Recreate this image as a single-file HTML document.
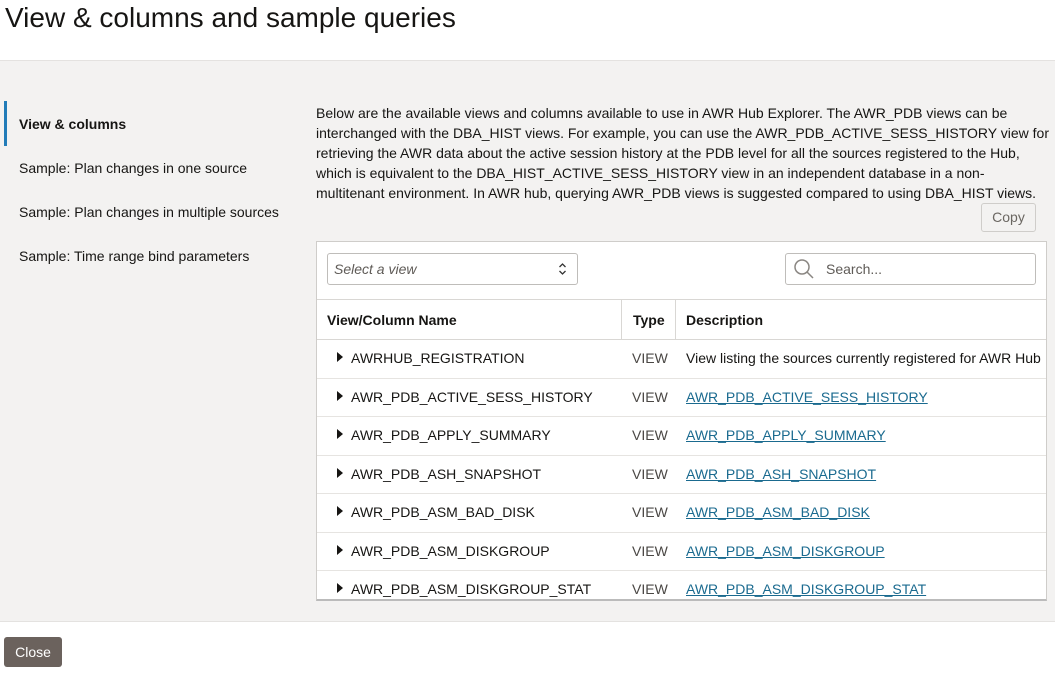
<!DOCTYPE html>
<html><head><meta charset="utf-8"><style>
*{box-sizing:border-box;margin:0;padding:0}
body{width:1055px;height:675px;overflow:hidden;font-family:"Liberation Sans",Arial,sans-serif;background:#fff;color:#161513;position:relative}
.hdr{position:absolute;left:0;top:0;width:1055px;height:61px;background:#fff;border-bottom:1px solid #e4e2e0}
.hdr h1{position:absolute;left:5px;top:2px;font-size:28px;font-weight:normal;color:#161513}
.main{position:absolute;left:0;top:61px;width:1055px;height:561px;background:#f3f2f1;border-bottom:1px solid #e4e2e0}
.nav div{position:absolute;left:19px;font-size:14px;color:#161513}
.bar{position:absolute;left:4px;top:40px;width:3px;height:45px;background:#227cb8}
.para{position:absolute;left:316px;top:42px;width:735px;font-size:14px;line-height:20px;color:#161513}
.copy{position:absolute;left:981px;top:142px;width:55px;height:29px;border:1px solid #cfcdca;border-radius:3px;background:#f3f2f1;font-size:14px;color:#6b6762;text-align:center;line-height:27px}
.tbl{position:absolute;left:316px;top:180px;width:731px;height:360px;background:#fff;border:1px solid #cfcdca;border-bottom:2px solid #bbb;overflow:hidden}
.sel{position:absolute;left:10px;top:11px;width:251px;height:32px;border:1px solid #bfbdba;border-radius:3px;font-style:italic;font-size:14px;color:#5f5b57;padding:7px 6px}
.srch{position:absolute;left:468px;top:11px;width:251px;height:32px;border:1px solid #bfbdba;border-radius:3px;font-size:14px;color:#5f5b57;padding:7px 0 0 40px}
.th{position:absolute;top:57px;left:0;width:731px;height:41px;border-top:1px solid #d9d7d4;border-bottom:1px solid #d9d7d4;font-weight:bold;font-size:14px}
.th span{position:absolute;top:12px}
.vs{position:absolute;top:0;width:1px;height:40px;background:#d9d7d4}
.row{position:absolute;left:0;width:731px;height:38.5px;border-bottom:1px solid #e6e4e1;font-size:14px}
.row span{position:absolute;top:10px;white-space:nowrap}
.row .a{left:34px}.row .t{left:315px;color:#4a4744}.row .d{left:369px}
.row a{color:#1a6a8f;text-decoration:underline}
.tri{position:absolute;left:20px;top:12px;width:0;height:0;border-top:5px solid transparent;border-bottom:5px solid transparent;border-left:6px solid #161513}
.close{position:absolute;left:4px;top:637px;width:58px;height:30px;background:#6b625d;border-radius:3px;color:#fff;font-size:14px;text-align:center;line-height:30px}
</style></head><body>
<div class="hdr"><h1>View &amp; columns and sample queries</h1></div>
<div class="main">
<div class="bar"></div>
<div class="nav">
<div style="top:55px;font-weight:bold">View &amp; columns</div>
<div style="top:99px">Sample: Plan changes in one source</div>
<div style="top:143px">Sample: Plan changes in multiple sources</div>
<div style="top:187px">Sample: Time range bind parameters</div>
</div>
<div class="para">Below are the available views and columns available to use in AWR Hub Explorer. The AWR_PDB views can be interchanged with the DBA_HIST views. For example, you can use the AWR_PDB_ACTIVE_SESS_HISTORY view for retrieving the AWR data about the active session history at the PDB level for all the sources registered to the Hub, which is equivalent to the DBA_HIST_ACTIVE_SESS_HISTORY view in an independent database in a non-multitenant environment. In AWR hub, querying AWR_PDB views is suggested compared to using DBA_HIST views.</div>
<div class="copy">Copy</div>
<div class="tbl">
<div class="sel">Select a view<svg style="position:absolute;right:10px;top:8px" width="9" height="14" viewBox="0 0 9 14"><path d="M1.5 5 4.5 2 7.5 5M1.5 9 4.5 12 7.5 9" fill="none" stroke="#333" stroke-width="1.3"/></svg></div>
<div class="srch"><svg style="position:absolute;left:7px;top:4px" width="22" height="22" viewBox="0 0 22 22"><circle cx="9" cy="9" r="7" fill="none" stroke="#8a8682" stroke-width="1.5"/><path d="M14 14 20 20" stroke="#8a8682" stroke-width="1.5"/></svg>Search...</div>
<div class="th"><span style="left:10px">View/Column Name</span><div class="vs" style="left:304px"></div><span style="left:316px">Type</span><div class="vs" style="left:358px"></div><span style="left:369px">Description</span></div>
<div class="row" style="top:98px"><div class="tri"></div><span class="a">AWRHUB_REGISTRATION</span><span class="t">VIEW</span><span class="d">View listing the sources currently registered for AWR Hub</span></div>
<div class="row" style="top:136.5px"><div class="tri"></div><span class="a">AWR_PDB_ACTIVE_SESS_HISTORY</span><span class="t">VIEW</span><span class="d"><a>AWR_PDB_ACTIVE_SESS_HISTORY</a></span></div>
<div class="row" style="top:175px"><div class="tri"></div><span class="a">AWR_PDB_APPLY_SUMMARY</span><span class="t">VIEW</span><span class="d"><a>AWR_PDB_APPLY_SUMMARY</a></span></div>
<div class="row" style="top:213.5px"><div class="tri"></div><span class="a">AWR_PDB_ASH_SNAPSHOT</span><span class="t">VIEW</span><span class="d"><a>AWR_PDB_ASH_SNAPSHOT</a></span></div>
<div class="row" style="top:252px"><div class="tri"></div><span class="a">AWR_PDB_ASM_BAD_DISK</span><span class="t">VIEW</span><span class="d"><a>AWR_PDB_ASM_BAD_DISK</a></span></div>
<div class="row" style="top:290.5px"><div class="tri"></div><span class="a">AWR_PDB_ASM_DISKGROUP</span><span class="t">VIEW</span><span class="d"><a>AWR_PDB_ASM_DISKGROUP</a></span></div>
<div class="row" style="top:329px"><div class="tri"></div><span class="a">AWR_PDB_ASM_DISKGROUP_STAT</span><span class="t">VIEW</span><span class="d"><a>AWR_PDB_ASM_DISKGROUP_STAT</a></span></div>
</div>
</div>
<div class="close">Close</div>
</body></html>
